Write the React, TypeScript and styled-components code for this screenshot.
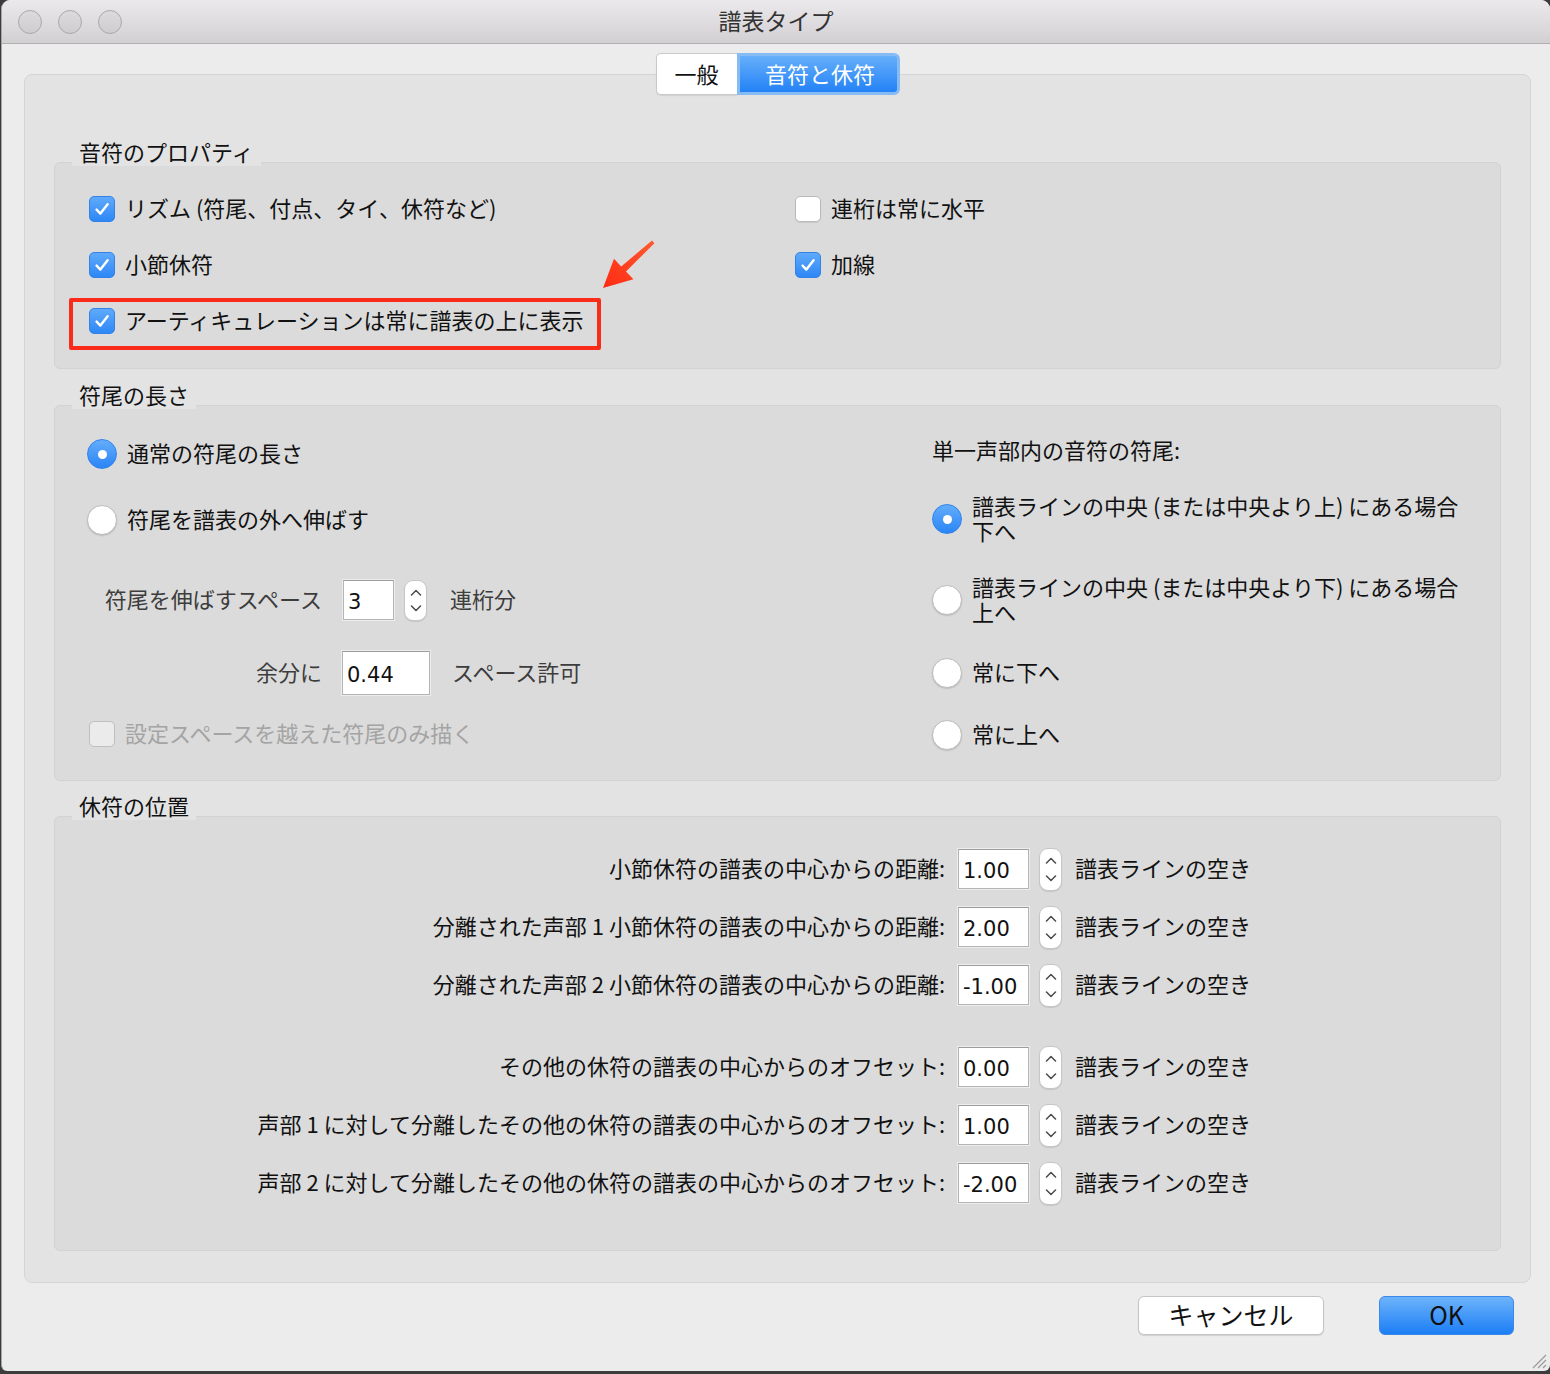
import React from 'react';
import styled, { createGlobalStyle, css } from 'styled-components';

const FONT = '"Noto Sans CJK JP", "Noto Sans", sans-serif';
const NUM_FONT = '"DejaVu Sans", "Noto Sans CJK JP", sans-serif';

const GlobalStyle = createGlobalStyle`
  html, body {
    margin: 0;
    padding: 0;
  }
  body {
    background: #3c3c3c;
    font-family: ${FONT};
    color: #111;
  }
`;

const Window = styled.div`
  position: relative;
  margin-left: 1px;
  width: 1549px;
  height: 1371px;
  box-sizing: border-box;
  border-left: 1px solid #a6a6a6;
  background: #ececec;
  border-radius: 9px 9px 6px 6px;
  overflow: hidden;
  display: flex;
  flex-direction: column;
`;

const TitleBar = styled.div`
  flex: none;
  height: 43px;
  display: grid;
  grid-template-columns: 1fr auto 1fr;
  align-items: center;
  background: linear-gradient(#ebe9eb, #d2d0d2);
  border-bottom: 1px solid #b0b0b0;
`;

const Lights = styled.div`
  display: flex;
  gap: 16px;
  padding-left: 16px;
`;

const Light = styled.span`
  width: 24px;
  height: 24px;
  box-sizing: border-box;
  border-radius: 50%;
  background: linear-gradient(#dcdadc, #cfcdcf);
  border: 1px solid #a9a9a9;
`;

const Title = styled.div`
  font-size: 23px;
  line-height: 26px;
  padding-bottom: 3px;
  color: #333;
`;

const Content = styled.div`
  flex: 1;
  display: flex;
  flex-direction: column;
  padding: 30px 19px 0 22px;
`;

const TabBox = styled.div`
  height: 1209px;
  box-sizing: border-box;
  display: flex;
  flex-direction: column;
  padding: 0 29px;
  background: #e3e3e3;
  border: 1px solid #d5d5d5;
  border-radius: 8px;
`;

const Segmented = styled.div`
  align-self: center;
  display: flex;
  height: 42px;
  margin-top: -22px;
  margin-bottom: 45px;
`;

const Segment = styled.div<{ $active?: boolean }>`
  box-sizing: border-box;
  display: flex;
  align-items: center;
  justify-content: center;
  font-size: 22px;
  line-height: 24px;
  padding-bottom: 3px;
  ${p =>
    p.$active
      ? css`
          width: 163px;
          padding-left: 4px;
          color: #fff;
          background: linear-gradient(#66affb, #2382f6);
          border: 3px solid #86bbf3;
          border-radius: 0 6px 6px 0;
        `
      : css`
          width: 81px;
          color: #111;
          background: #fff;
          border: 1px solid #c9c9c9;
          border-right: none;
          border-radius: 5px 0 0 5px;
          box-shadow: 0 1px 1px rgba(0, 0, 0, 0.08);
        `}
`;

const GroupLabel = styled.div<{ $top?: number }>`
  position: relative;
  z-index: 1;
  align-self: flex-start;
  margin: ${p => p.$top ?? 0}px 0 -4px 18px;
  padding: 0 7px 4px;
  height: 26px;
  box-sizing: border-box;
  line-height: 22px;
  font-size: 22px;
  background: #e3e3e3;
`;

const GroupBox = styled.div<{ $h: number }>`
  position: relative;
  height: ${p => p.$h}px;
  box-sizing: border-box;
  background: #dbdbdb;
  border: 1px solid #d2d2d2;
  border-radius: 6px;
`;

const PropsGrid = styled.div`
  display: grid;
  grid-template-columns: 706px 1fr;
  grid-auto-rows: 56px;
  padding: 18px 0 0 34px;
`;

const StemGrid = styled.div`
  display: grid;
  grid-template-columns: 845px 1fr;
  padding-left: 32px;
`;

const Column = styled.div`
  display: flex;
  flex-direction: column;
`;

const Option = styled.div<{ $top?: number; $h?: number; $indent?: number }>`
  position: relative;
  display: flex;
  align-items: center;
  gap: 10px;
  height: ${p => p.$h ?? 44}px;
  margin-top: ${p => p.$top ?? 0}px;
  margin-left: ${p => p.$indent ?? 0}px;
`;

const Text = styled.span<{ $tone?: 'normal' | 'soft' | 'disabled' }>`
  font-size: 22px;
  line-height: 25px;
  padding-bottom: 4px;
  white-space: nowrap;
  color: ${p => (p.$tone === 'disabled' ? '#a4a4a4' : p.$tone === 'soft' ? '#3d3d3d' : '#111')};
`;

const TextLines = styled.span`
  display: flex;
  flex-direction: column;
  padding-bottom: 3px;
`;

const Line = styled.span`
  display: block;
  font-size: 22px;
  line-height: 25px;
  height: 25px;
  white-space: nowrap;
  color: #111;
`;

const CheckBox = styled.span<{ $checked?: boolean; $disabled?: boolean }>`
  flex: none;
  width: 26px;
  height: 26px;
  box-sizing: border-box;
  border-radius: 5px;
  display: flex;
  align-items: center;
  justify-content: center;
  ${p =>
    p.$checked
      ? css`
          background: linear-gradient(#5faafb, #2e87f6);
          border: 1px solid #3183ea;
        `
      : p.$disabled
      ? css`
          background: #ebebeb;
          border: 1px solid #bfbfbf;
        `
      : css`
          background: #fff;
          border: 1px solid #b9b9b9;
          box-shadow: 0 1px 1px rgba(0, 0, 0, 0.08);
        `}
`;

const Radio = styled.span<{ $on?: boolean }>`
  flex: none;
  width: 30px;
  height: 30px;
  box-sizing: border-box;
  border-radius: 50%;
  display: flex;
  align-items: center;
  justify-content: center;
  ${p =>
    p.$on
      ? css`
          background: linear-gradient(#63adfb, #2b85f6);
          border: 1px solid #2f83ee;
          &::after {
            content: '';
            width: 9px;
            height: 9px;
            border-radius: 50%;
            background: #fff;
          }
        `
      : css`
          background: #fff;
          border: 1px solid #bcbcbc;
          box-shadow: 0 1px 1.5px rgba(0, 0, 0, 0.15);
        `}
`;

const Highlight = styled.div`
  position: absolute;
  left: -20px;
  top: 5px;
  width: 532px;
  height: 52px;
  box-sizing: border-box;
  border: 4px solid #fb2b1a;
  border-radius: 2px;
  pointer-events: none;
`;

const Arrow = styled.svg`
  position: absolute;
  left: 540px;
  top: 72px;
`;

const FieldLabel = styled(Text)`
  width: 235px;
  text-align: right;
`;

const NumberField = styled.div<{ $w: number; $h: number; $ml: number }>`
  flex: none;
  width: ${p => p.$w}px;
  height: ${p => p.$h}px;
  margin-left: ${p => p.$ml}px;
  box-sizing: border-box;
  display: flex;
  align-items: center;
  padding: 3px 0 0 4px;
  background: #fff;
  border: 1px solid #b4b4b4;
  border-top-color: #9c9c9c;
  box-shadow: 0 0 0 1px rgba(255, 255, 255, 0.5);
  font-family: ${NUM_FONT};
  font-size: 21px;
  color: #111;
`;

const Stepper = styled.div<{ $h: number; $ml: number }>`
  flex: none;
  width: 23px;
  height: ${p => p.$h}px;
  margin-left: ${p => p.$ml}px;
  box-sizing: border-box;
  display: flex;
  flex-direction: column;
  align-items: center;
  justify-content: space-between;
  padding: 8px 0;
  background: #fff;
  border: 1px solid #c6c6c6;
  border-radius: 9px;
  box-shadow: 0 1px 1px rgba(0, 0, 0, 0.1);
`;

const Unit = styled(Text)<{ $ml: number }>`
  margin-left: ${p => p.$ml}px;
`;

const FieldRow = styled.div<{ $top: number; $h?: number }>`
  display: flex;
  align-items: center;
  height: ${p => p.$h ?? 44}px;
  margin-top: ${p => p.$top}px;
`;

const OffsetList = styled.div`
  display: flex;
  flex-direction: column;
`;

const OffsetRow = styled.div<{ $top: number }>`
  display: flex;
  align-items: center;
  height: 44px;
  margin-top: ${p => p.$top}px;
`;

const OffsetLabel = styled(Text)`
  width: 890px;
  text-align: right;
`;

const ButtonBar = styled.div`
  display: flex;
  justify-content: flex-end;
  gap: 55px;
  margin: 13px 17px 0 0;
`;

const Button = styled.button<{ $primary?: boolean; $w: number }>`
  width: ${p => p.$w}px;
  height: 39px;
  box-sizing: border-box;
  border-radius: 6px;
  font-family: ${FONT};
  font-size: 25px;
  line-height: 1;
  color: #111;
  padding: 0 0 3px;
  ${p =>
    p.$primary
      ? css`
          background: linear-gradient(#6db3fb, #1c7ef5);
          border: 1px solid #3a88e8;
        `
      : css`
          background: #fff;
          border: 1px solid #c4c4c4;
          box-shadow: 0 1px 1px rgba(0, 0, 0, 0.12);
        `}
`;

const Grip = styled.svg`
  position: absolute;
  right: 3px;
  bottom: 2px;
`;

const CheckMark = () => (
  <svg width="20" height="20" viewBox="0 0 20 20">
    <path d="M4.6 10.6 L8.4 14.6 L15.6 5.2" fill="none" stroke="#fff" strokeWidth="2.4" strokeLinecap="round" strokeLinejoin="round" />
  </svg>
);

const Box: React.FC<{ checked?: boolean; disabled?: boolean }> = ({ checked, disabled }) => (
  <CheckBox $checked={checked} $disabled={disabled}>{checked && <CheckMark />}</CheckBox>
);

const Chevron: React.FC<{ up?: boolean }> = ({ up }) => (
  <svg width="12" height="7" viewBox="0 0 12 7">
    <path d={up ? 'M1.5 6 L6 1.5 L10.5 6' : 'M1.5 1 L6 5.5 L10.5 1'} fill="none" stroke="#4a4a4a" strokeWidth="1.5" strokeLinecap="round" strokeLinejoin="round" />
  </svg>
);

const Spin: React.FC<{ h: number; ml: number }> = ({ h, ml }) => (
  <Stepper $h={h} $ml={ml}>
    <Chevron up />
    <Chevron />
  </Stepper>
);

const offsets = [
  { label: '小節休符の譜表の中心からの距離:', value: '1.00', top: 30 },
  { label: '分離された声部 1 小節休符の譜表の中心からの距離:', value: '2.00', top: 14 },
  { label: '分離された声部 2 小節休符の譜表の中心からの距離:', value: '-1.00', top: 14 },
  { label: 'その他の休符の譜表の中心からのオフセット:', value: '0.00', top: 38 },
  { label: '声部 1 に対して分離したその他の休符の譜表の中心からのオフセット:', value: '1.00', top: 14 },
  { label: '声部 2 に対して分離したその他の休符の譜表の中心からのオフセット:', value: '-2.00', top: 14 },
];

const App: React.FC = () => {
  return (
    <>
      <GlobalStyle />
      <Window>
        <TitleBar>
          <Lights>
            <Light />
            <Light />
            <Light />
          </Lights>
          <Title>譜表タイプ</Title>
          <div />
        </TitleBar>

        <Content>
          <TabBox>
            <Segmented>
              <Segment>一般</Segment>
              <Segment $active>音符と休符</Segment>
            </Segmented>

            <GroupLabel>音符のプロパティ</GroupLabel>
            <GroupBox $h={207}>
              <PropsGrid>
                <Option $h={56}>
                  <Box checked />
                  <Text>リズム (符尾、付点、タイ、休符など)</Text>
                </Option>
                <Option $h={56}>
                  <Box />
                  <Text>連桁は常に水平</Text>
                </Option>
                <Option $h={56}>
                  <Box checked />
                  <Text>小節休符</Text>
                </Option>
                <Option $h={56}>
                  <Box checked />
                  <Text>加線</Text>
                </Option>
                <Option $h={56}>
                  <Box checked />
                  <Text>アーティキュレーションは常に譜表の上に表示</Text>
                  <Highlight />
                </Option>
              </PropsGrid>
              <Arrow width="64" height="60" viewBox="0 0 64 60">
                <defs>
                  <linearGradient id="arrowFill" x1="0" y1="1" x2="1" y2="0">
                    <stop offset="0" stopColor="#ff2a12" />
                    <stop offset="1" stopColor="#ff5a30" />
                  </linearGradient>
                </defs>
                <polygon
                  points="8,53 19,23.7 26.2,31.4 57,5.6 59.4,8.2 31,36.6 38.4,44.3"
                  fill="url(#arrowFill)"
                />
              </Arrow>
            </GroupBox>

            <GroupLabel $top={14}>符尾の長さ</GroupLabel>
            <GroupBox $h={376}>
              <StemGrid>
                <Column>
                  <Option $top={26}>
                    <Radio $on />
                    <Text>通常の符尾の長さ</Text>
                  </Option>
                  <Option $top={22}>
                    <Radio />
                    <Text>符尾を譜表の外へ伸ばす</Text>
                  </Option>
                  <FieldRow $top={36}>
                    <FieldLabel $tone="soft">符尾を伸ばすスペース</FieldLabel>
                    <NumberField $w={51} $h={40} $ml={21}>3</NumberField>
                    <Spin h={41} ml={10} />
                    <Unit $tone="soft" $ml={23}>連桁分</Unit>
                  </FieldRow>
                  <FieldRow $top={29}>
                    <FieldLabel $tone="soft">余分に</FieldLabel>
                    <NumberField $w={88} $h={44} $ml={20}>0.44</NumberField>
                    <Unit $tone="soft" $ml={22}>スペース許可</Unit>
                  </FieldRow>
                  <Option $top={17} $indent={2}>
                    <Box disabled />
                    <Text $tone="disabled">設定スペースを越えた符尾のみ描く</Text>
                  </Option>
                </Column>

                <Column>
                  <Option $top={23}>
                    <Text>単一声部内の音符の符尾:</Text>
                  </Option>
                  <Option $top={21} $h={50}>
                    <Radio $on />
                    <TextLines>
                      <Line>譜表ラインの中央 (または中央より上) にある場合</Line>
                      <Line>下へ</Line>
                    </TextLines>
                  </Option>
                  <Option $top={31} $h={50}>
                    <Radio />
                    <TextLines>
                      <Line>譜表ラインの中央 (または中央より下) にある場合</Line>
                      <Line>上へ</Line>
                    </TextLines>
                  </Option>
                  <Option $top={26}>
                    <Radio />
                    <Text>常に下へ</Text>
                  </Option>
                  <Option $top={18}>
                    <Radio />
                    <Text>常に上へ</Text>
                  </Option>
                </Column>
              </StemGrid>
            </GroupBox>

            <GroupLabel $top={13}>休符の位置</GroupLabel>
            <GroupBox $h={435}>
              <OffsetList>
                {offsets.map(row => (
                  <OffsetRow key={row.label} $top={row.top}>
                    <OffsetLabel>{row.label}</OffsetLabel>
                    <NumberField $w={71} $h={40} $ml={13}>{row.value}</NumberField>
                    <Spin h={43} ml={10} />
                    <Unit $ml={13}>譜表ラインの空き</Unit>
                  </OffsetRow>
                ))}
              </OffsetList>
            </GroupBox>
          </TabBox>

          <ButtonBar>
            <Button $w={186}>キャンセル</Button>
            <Button $w={135} $primary>OK</Button>
          </ButtonBar>
        </Content>

        <Grip width="20" height="20" viewBox="0 0 20 20">
          <path d="M19 6 L6 19 M19 11 L11 19 M19 16 L16 19" stroke="#9a9a9a" strokeWidth="1.2" />
        </Grip>
      </Window>
    </>
  );
};

export default App;
